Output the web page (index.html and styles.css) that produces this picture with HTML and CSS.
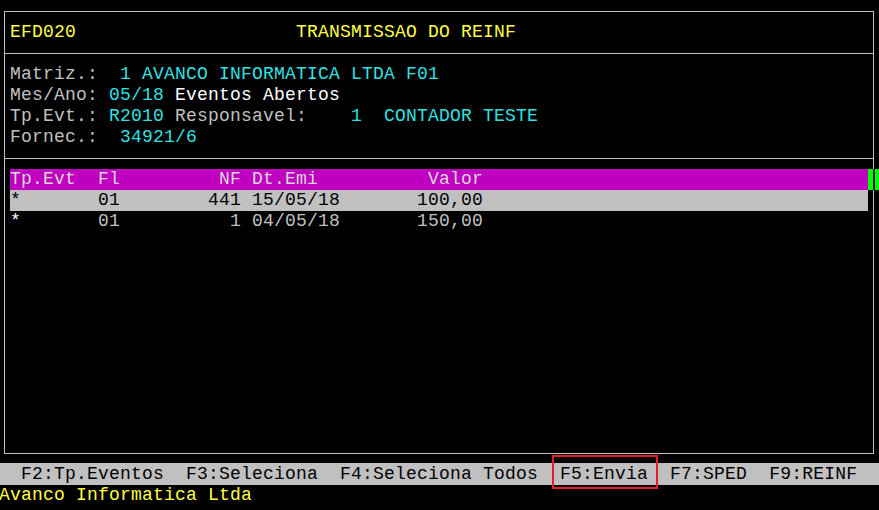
FILE: index.html
```html
<!DOCTYPE html>
<html lang="pt">
<head>
  <meta charset="UTF-8">
  <title>EFD020 - Transmissao do REINF</title>
  <link rel="stylesheet" href="styles.css">
</head>
<body>
  <div class="screen">
    <div class="frame">
      <div class="section title-bar">
        <div class="line yellow">EFD020                    TRANSMISSAO DO REINF</div>
      </div>

      <div class="section info">
        <div class="line">Matriz.:  <span class="cyan">1 AVANCO INFORMATICA LTDA F01</span></div>
        <div class="line">Mes/Ano: <span class="cyan">05/18</span> <span class="white">Eventos Abertos</span></div>
        <div class="line">Tp.Evt.: <span class="cyan">R2010</span> Responsavel:    <span class="cyan">1  CONTADOR TESTE</span></div>
        <div class="line">Fornec.:  <span class="cyan">34921/6</span></div>
      </div>

      <div class="section list">
        <div class="grid-row head">
          <span class="cells">Tp.Evt  Fl         NF Dt.Emi          Valor</span>
          <span class="scroll-mark"></span>
        </div>
        <div class="grid-row selected">
          <span class="cells">*       01        441 15/05/18       100,00</span>
        </div>
        <div class="grid-row">
          <span class="cells"><span class="white">*</span>       01          1 04/05/18       150,00</span>
        </div>
      </div>
    </div>

    <div class="keys">  F2:Tp.Eventos  F3:Seleciona  F4:Seleciona Todos  <span class="key-marked">F5:Envia</span>  F7:SPED  F9:REINF</div>
    <div class="footer yellow">Avanco Informatica Ltda</div>
  </div>
</body>
</html>
```

FILE: styles.css
```css
:root {
  --term-gray: #c0c0c0;
  --term-cyan: #30e0e0;
  --term-yellow: #ffff40;
  --term-magenta: #c000c0;
  --term-green: #00ff00;
  --mark-red: #e3202a;
  --row: 21px;
}

* {
  margin: 0;
  padding: 0;
  box-sizing: border-box;
}

body {
  background-color: #000;
  color: var(--term-gray);
  font-family: 'Liberation Mono', 'DejaVu Sans Mono', monospace;
  font-size: 18px;
  letter-spacing: 0.2px;
  line-height: var(--row);
  overflow: hidden;
}

.screen {
  width: 880px;
  margin-left: -1px;
  padding-top: 11px;
}

.frame {
  width: 870px;
  margin-left: 5px;
  border: 1px solid var(--term-gray);
}

.section {
  padding: 10px 0 10px 5px;
}

.title-bar,
.info {
  border-bottom: 1px solid var(--term-gray);
}

.line {
  height: var(--row);
  white-space: pre;
}

.list {
  height: 294px;
}

.grid-row {
  display: flex;
  height: var(--row);
  white-space: pre;
}

.grid-row .cells {
  width: 858px;
}

.head {
  margin-right: -6px;
}

.head .cells {
  background-color: var(--term-magenta);
  color: #d8d8d8;
}

.selected .cells {
  background-color: var(--term-gray);
  color: #000;
}

.scroll-mark {
  width: 11px;
  background: linear-gradient(to right, var(--term-green) 5px, #111 5px, #111 7px, var(--term-green) 7px);
}

.keys {
  margin-top: 9px;
  height: 22px;
  padding-top: 1px;
  background-color: var(--term-gray);
  color: #000;
  white-space: pre;
}

.key-marked {
  position: relative;
  display: inline-block;
}

.key-marked::after {
  content: '';
  position: absolute;
  top: -9px;
  left: -8px;
  width: 102px;
  height: 30px;
  border: 2px solid var(--mark-red);
}

.footer {
  height: var(--row);
  white-space: pre;
}

.yellow { color: var(--term-yellow); }
.cyan { color: var(--term-cyan); }
.white { color: #fff; }
```
